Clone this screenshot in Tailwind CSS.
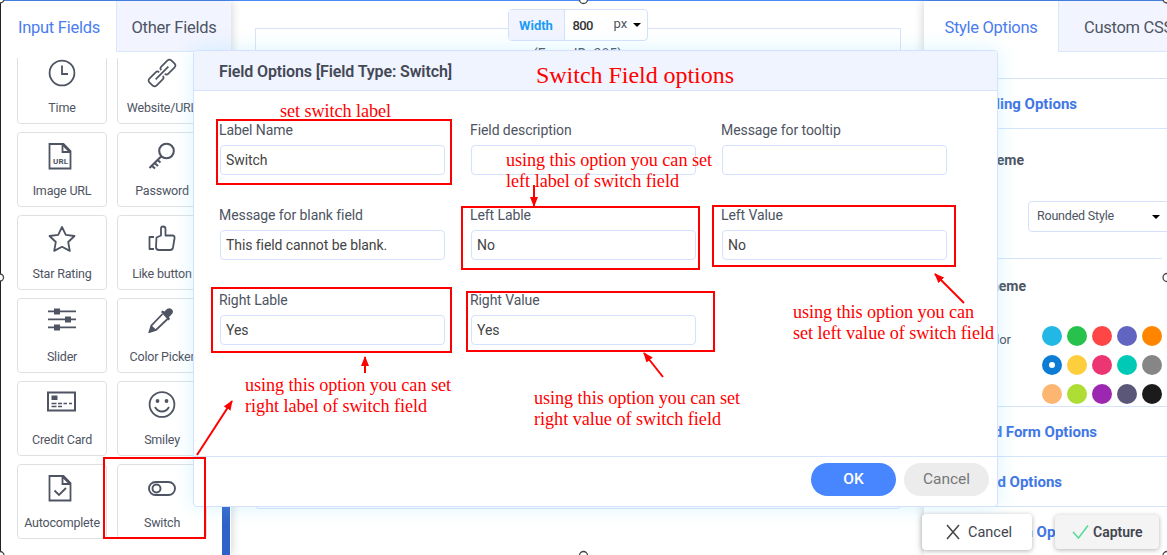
<!DOCTYPE html>
<html lang="en">
<head>
<meta charset="utf-8">
<title>Field Options</title>
<script src="https://cdn.jsdelivr.net/npm/@tailwindcss/browser@4"></script>
</head>
<body class="relative h-[555px] w-[1167px] overflow-hidden bg-white font-['Roboto','Noto_Sans',sans-serif] text-[#4e5462]">
<div class="flex h-[555px] border-t border-[#4a8af4]">
  <!-- Field palette -->
  <aside class="relative z-10 flex w-[231px] shrink-0 flex-col overflow-hidden border-l border-[#222] bg-white shadow-[0_0_10px_rgba(0,0,0,0.2)]">
    <nav class="flex h-[51px] shrink-0 pl-px text-[16.500px] tracking-[-0.25px]">
      <div class="flex w-[114px] shrink-0 items-center justify-center pt-[3px] text-[#4a7df0]">Input Fields</div>
      <div class="flex flex-1 items-center justify-center border-b border-l border-[#d6e8fa] bg-[#f2f4ff] pt-1 whitespace-nowrap">Other Fields</div>
    </nav>
    <div class="mt-[6px] flex-1 overflow-hidden pl-4">
      <div class="-mt-[9px] grid grid-cols-[90px_90px] gap-x-[10px] gap-y-2 text-[12.500px] leading-4 tracking-[-0.2px]">
        <div class="flex h-[75px] flex-col items-center justify-between rounded border border-[#dee1e4] pt-[9px] pb-[7px]">
          <svg class="size-7" viewBox="0 0 28 28" fill="none" stroke="#4e5462" stroke-width="1.8"><circle cx="14" cy="14" r="12.4"/><path d="M14 6.5V15h6"/></svg><span>Time</span></div>
        <div class="flex h-[75px] flex-col items-center justify-between rounded border border-[#dee1e4] pt-[9px] pb-[7px]">
          <svg class="size-7 overflow-visible" viewBox="0 0 28 28" fill="none" stroke="#4e5462" stroke-width="1.7"><g transform="rotate(-45 14 14)"><path d="M12.500 11.500q0-2.500-2.500-2.500H1.500q-3 0-3 3v4q0 3 3 3H10q2.500 0 2.500-2.500M15.500 16.500q0 2.500 2.500 2.500h8.500q3 0 3-3v-4q0-3-3-3H18q-2.500 0-2.500 2.500M5 14h18"/></g></svg><span class="whitespace-nowrap">Website/URL</span></div>
        <div class="flex h-[75px] flex-col items-center justify-between rounded border border-[#dee1e4] pt-[9px] pb-[7px]">
          <svg class="size-7 overflow-visible" viewBox="0 0 28 28" fill="none" stroke="#4e5462" stroke-width="1.8"><path d="M1.500 2h14l7 7v17.500h-21zM14.500 2v8h8"/><path d="M15 3l6.500 6.500"/><text x="12.500" y="21.500" text-anchor="middle" font-size="8" font-weight="700" textLength="15" fill="#4e5462" stroke="none">URL</text></svg><span>Image URL</span></div>
        <div class="flex h-[75px] flex-col items-center justify-between rounded border border-[#dee1e4] pt-[9px] pb-[7px]">
          <svg class="size-7" viewBox="0 0 28 28" fill="none" stroke="#4e5462" stroke-width="2.100"><circle cx="18.500" cy="9" r="7.300"/><path d="M13.300 14.300L1.500 26M3.500 23.500l3.500 3M6 20.500l4 3.500M9.500 18l3 2.500"/></svg><span>Password</span></div>
        <div class="flex h-[75px] flex-col items-center justify-between rounded border border-[#dee1e4] pt-[9px] pb-[7px]">
          <svg class="size-7" viewBox="0 0 28 28" fill="none" stroke="#4e5462" stroke-width="1.800" stroke-linejoin="round"><path d="M14 2l3.800 7.800 8.700 1.200-6.300 6 1.600 8.900-7.800-4.100-7.800 4.100L7.800 17l-6.300-6 8.700-1.200z"/></svg><span>Star Rating</span></div>
        <div class="flex h-[75px] flex-col items-center justify-between rounded border border-[#dee1e4] pt-[9px] pb-[7px]">
          <svg class="size-7" viewBox="0 0 28 28" fill="none" stroke="#4e5462" stroke-width="1.800" stroke-linejoin="round"><path d="M6 12H1.500v12H6M8.500 12.500l4.500-2V3.500q0-2 2-2 2.500 0 2.500 2.500v6.500h7q2.500 0 2 3l-1.500 9q-.5 2.500-3 2.500H11q-3 0-3-3z"/></svg><span class="whitespace-nowrap">Like button</span></div>
        <div class="flex h-[75px] flex-col items-center justify-between rounded border border-[#dee1e4] pt-[9px] pb-[7px]">
          <svg class="size-7" viewBox="0 0 28 28" fill="#4e5462"><path d="M0 2.500h28v1.800H0zM0 10.500h28v1.800H0zM0 18.500h28v1.800H0z"/><path d="M6 .5h6v6H6zM17 8.500h6v6h-6zM6 16.500h6v6H6z"/></svg><span>Slider</span></div>
        <div class="flex h-[75px] flex-col items-center justify-between rounded border border-[#dee1e4] pt-[9px] pb-[7px]">
          <svg class="size-7" viewBox="0 0 28 28"><path d="M14.500 6L3.500 17.500 1.500 24l6.500-2L19.500 11" fill="none" stroke="#4e5462" stroke-width="1.800"/><path d="M1 25l2-8 5.500 5zM13 4l1.500-1.500 2 1q3-4 6-3 4 2 1.500 5.500L21 9l1 2-1.500 1.500z" fill="#4e5462"/></svg><span class="whitespace-nowrap">Color Picker</span></div>
        <div class="flex h-[75px] flex-col items-center justify-between rounded border border-[#dee1e4] pt-[9px] pb-[7px]">
          <svg class="size-7 overflow-visible" viewBox="0 0 28 28"><path d="M0 1.500h27v18H0z" fill="none" stroke="#4e5462" stroke-width="2"/><path d="M3.500 4.500h6v4.500h-6z" fill="#4e5462"/><path d="M3.500 12.500h5m1.500 0h4m1.500 0h3.500m2 0h3M3.500 15.500h5m1.500 0h4" stroke="#4e5462" stroke-width="1.700"/></svg><span class="whitespace-nowrap">Credit Card</span></div>
        <div class="flex h-[75px] flex-col items-center justify-between rounded border border-[#dee1e4] pt-[9px] pb-[7px]">
          <svg class="size-7" viewBox="0 0 28 28" fill="none" stroke="#4e5462" stroke-width="1.800"><circle cx="14" cy="13.500" r="12.400"/><path d="M7 16q2.500 4.500 7 4.500t7-4.500"/><g fill="#4e5462" stroke="none"><circle cx="9.500" cy="10" r="1.900"/><circle cx="18.500" cy="10" r="1.900"/></g></svg><span>Smiley</span></div>
        <div class="flex h-[75px] flex-col items-center justify-between rounded border border-[#dee1e4] pt-[9px] pb-[7px]">
          <svg class="size-7" viewBox="0 0 28 28" fill="none" stroke="#4e5462" stroke-width="1.800"><path d="M1.500 2h14l7 7v17.500h-21zM14.500 2v8h8M15 3l6.500 6.500M6.500 16.500l4.500 4.500 7-7"/></svg><span>Autocomplete</span></div>
        <div class="flex h-[75px] flex-col items-center justify-between rounded border border-[#dee1e4] pt-[9px] pb-[7px]">
          <svg class="size-7" viewBox="0 0 28 28" fill="none" stroke="#4e5462" stroke-width="1.900"><rect x="1" y="8" width="26" height="13" rx="6.500"/><circle cx="8.500" cy="14.500" r="4"/></svg><span>Switch</span></div>
      </div>
    </div>
    <div class="absolute right-px bottom-0 h-[60px] w-[8px] bg-[#2f62c9]"></div>
  </aside>

  <!-- Form canvas -->
  <main class="relative flex flex-1 flex-col items-center">
    <div class="absolute top-[27px] right-[23px] left-6 h-[481px] rounded-b border border-[#d9e2fb]"></div>
    <div class="z-10 mt-2 flex h-[32px] w-[140px] items-center rounded border border-[#d5e1fb] bg-white text-[13px]">
      <div class="flex h-full w-14 items-center justify-center border-r border-[#d5e1fb] bg-[#f2f4ff] pt-px font-bold text-[#1a9cf5]">Width</div>
      <div class="w-10 pt-px pl-2 font-medium tracking-[-0.6px] text-[#333]">800</div>
      <div class="pb-0.5 pl-[9px]">px</div>
      <div class="ml-[6px] h-0 w-0 border-x-4 border-t-4 border-x-transparent border-t-black"></div>
    </div>
    <div class="mt-[2px] text-[14px] leading-[22px]">(Form ID: 385)</div>
  </main>

  <!-- Style panel -->
  <aside class="relative flex w-[243px] shrink-0 flex-col overflow-hidden bg-white shadow-[0_0_10px_rgba(0,0,0,0.2)]">
    <nav class="flex h-[51px] shrink-0 text-[16.500px] tracking-[-0.3px]">
      <div class="flex w-[134px] shrink-0 items-center justify-center pt-[3px] text-[#4a7df0]">Style Options</div>
      <div class="flex flex-1 items-center border-b border-l border-[#d6e8fa] bg-[#f2f4ff] pt-1 pl-[25px] whitespace-nowrap">Custom CSS</div>
    </nav>
    <div class="mt-[26px] flex h-[51px] shrink-0 items-center border-y border-[#d5e3fb] pt-0.5 text-[15px] font-bold whitespace-nowrap text-[#4177e4]"><span class="flex w-[153px] justify-end">Basic Styling Options</span></div>
    <div class="flex h-[130px] shrink-0 flex-col">
      <div class="mt-[19px] flex w-[100px] justify-end text-[14px] leading-6 font-bold whitespace-nowrap">Select Theme</div>
      <div class="mt-[29px] ml-[104px] flex h-8 w-[150px] items-center rounded border border-[#d5e1fb] pl-2 text-[12.500px] tracking-[-0.2px]"><span class="w-[115px]">Rounded Style</span><i class="h-0 w-0 border-x-4 border-t-4 border-x-transparent border-t-black"></i></div>
      <div class="mt-[26px] w-[238px] border-t border-[#d5e3fb]"></div>
    </div>
    <div class="flex h-[147px] shrink-0 flex-col">
      <div class="mt-[15px] flex w-[102px] justify-end text-[14px] leading-6 font-bold whitespace-nowrap">Color Scheme</div>
      <div class="mt-[28px] flex">
        <div class="mt-[4px] flex w-[87px] justify-end text-[13px] leading-5 whitespace-nowrap">Choose Color</div>
        <div class="ml-[31px] grid grid-cols-[repeat(5,20px)] gap-x-[5px] gap-y-[9px]">
          <i class="size-5 rounded-full bg-[#23b7e5]"></i><i class="size-5 rounded-full bg-[#27c24c]"></i><i class="size-5 rounded-full bg-[#ff4545]"></i><i class="size-5 rounded-full bg-[#6164c1]"></i><i class="size-5 rounded-full bg-[#ff8500]"></i>
          <i class="flex size-5 items-center justify-center rounded-full bg-[#0c7cd5]"><b class="size-1.5 rounded-full bg-white"></b></i><i class="size-5 rounded-full bg-[#ffce3c]"></i><i class="size-5 rounded-full bg-[#ec3573]"></i><i class="size-5 rounded-full bg-[#00c9b6]"></i><i class="size-5 rounded-full bg-[#868686]"></i>
          <i class="size-5 rounded-full bg-[#fdb572]"></i><i class="size-5 rounded-full bg-[#aede36]"></i><i class="size-5 rounded-full bg-[#9c27b0]"></i><i class="size-5 rounded-full bg-[#5b5779]"></i><i class="size-5 rounded-full bg-[#1b1b1b]"></i>
        </div>
      </div>
    </div>
    <div class="flex h-[50px] shrink-0 items-center border-t border-[#d5e3fb] pt-0.5 text-[15px] font-bold whitespace-nowrap text-[#4177e4]"><span class="flex w-[173px] justify-end">Advanced Form Options</span></div>
    <div class="flex h-[50px] shrink-0 items-center border-t border-[#d5e3fb] pt-0.5 text-[15px] font-bold whitespace-nowrap text-[#4177e4]"><span class="flex w-[138px] justify-end">Input Field Options</span></div>
    <div class="flex h-[50px] shrink-0 items-center border-t border-[#d5e3fb] pt-0.5 text-[15px] font-bold whitespace-nowrap text-[#4177e4]"><span class="flex w-[165px] justify-end">Submit Button Options</span></div>
  </aside>
</div>

<!-- Field options dialog -->
<section class="absolute top-[50px] left-[193px] z-20 flex h-[457px] w-[805px] flex-col rounded border border-[#d5e1fd] bg-white text-[14px] shadow-[0_0_20px_rgba(120,215,255,0.28)]">
  <header class="flex h-10 shrink-0 items-center rounded-t border-b border-[#d5e1fd] bg-[#f0f4ff] pt-[3px] pl-[25px] text-[16px] font-semibold tracking-[-0.12px] text-[#434955]">Field Options [Field Type: Switch]</header>
  <div class="grid flex-1 auto-rows-[85px] grid-cols-[repeat(3,251px)] pt-[29px] pl-[25px] leading-5 tracking-[-0.08px]">
    <label class="flex flex-col">Label Name<span class="mt-[5px] ml-px flex h-[30px] w-[225px] items-center rounded border border-[#d5e1fd] pl-[5px] text-[#444]">Switch</span></label>
    <label class="flex flex-col">Field description<span class="mt-[5px] ml-px flex h-[30px] w-[225px] rounded border border-[#d5e1fd]"></span></label>
    <label class="flex flex-col">Message for tooltip<span class="mt-[5px] ml-px flex h-[30px] w-[225px] rounded border border-[#d5e1fd]"></span></label>
    <label class="flex flex-col">Message for blank field<span class="mt-[5px] ml-px flex h-[30px] w-[225px] items-center rounded border border-[#d5e1fd] pl-[5px] text-[#444]">This field cannot be blank.</span></label>
    <label class="flex flex-col">Left Lable<span class="mt-[5px] ml-px flex h-[30px] w-[225px] items-center rounded border border-[#d5e1fd] pl-[5px] text-[#444]">No</span></label>
    <label class="flex flex-col">Left Value<span class="mt-[5px] ml-px flex h-[30px] w-[225px] items-center rounded border border-[#d5e1fd] pl-[5px] text-[#444]">No</span></label>
    <label class="flex flex-col">Right Lable<span class="mt-[5px] ml-px flex h-[30px] w-[225px] items-center rounded border border-[#d5e1fd] pl-[5px] text-[#444]">Yes</span></label>
    <label class="flex flex-col">Right Value<span class="mt-[5px] ml-px flex h-[30px] w-[225px] items-center rounded border border-[#d5e1fd] pl-[5px] text-[#444]">Yes</span></label>
  </div>
  <footer class="flex h-[50px] shrink-0 justify-end gap-2 border-t border-[#d5e1fd] pt-[6px] pr-2 text-[15.500px]">
    <button class="h-[33px] w-[85px] rounded-full bg-[#4786ff] pt-px font-medium text-white">OK</button>
    <button class="h-[33px] w-[85px] rounded-full bg-[#ececec] pt-px text-[#777]">Cancel</button>
  </footer>
</section>

<!-- Capture tool buttons -->
<div class="absolute top-[514px] left-[922px] z-30 flex items-center gap-[23px] text-[14.500px] text-[#42454f]">
  <div class="flex h-9 w-[110px] items-center gap-2 rounded bg-white pl-6 shadow-[0_1px_5px_rgba(0,0,0,0.3)]"><svg class="h-4 w-[14px]" viewBox="0 0 14 16" fill="none" stroke="#444" stroke-width="1.500"><path d="M1 1l12 14M13 1L1 15"/></svg><span class="pt-px">Cancel</span></div>
  <div class="flex h-[34px] w-[104px] items-center gap-1 rounded bg-[#f4f4f4] pl-[17px] text-[14px] font-semibold shadow-[0_1px_5px_rgba(0,0,0,0.3)]"><svg class="h-4 w-[17px] shrink-0" viewBox="0 0 17 16" fill="none" stroke="#57dc9a" stroke-width="1.600"><path d="M1 8l5.500 6L16 1.500"/></svg>Capture</div>
</div>

<!-- Annotations -->
<svg class="absolute inset-0 z-40" width="1167" height="555" viewBox="0 0 1167 555">
  <defs><marker id="tip" markerUnits="userSpaceOnUse" markerWidth="10" markerHeight="8" refX="9" refY="4" orient="auto"><path d="M0 0l10 4-10 4z" fill="#f00"/></marker></defs>
  <g fill="none" stroke="#f00" stroke-width="2">
    <path d="M217 120h234v64H217zM462 207h237v62H462zM713 206h242v60H713zM212 288h239v64H212zM467 292h247v59H467zM104 458h101v80H104z"/>
    <g marker-end="url(#tip)"><path d="M534 185v21"/><path d="M964 303l-29-29"/><path d="M365 373v-16"/><path d="M663 377l-19-24"/><path d="M197 455l35-54"/></g>
  </g>
  <g fill="#f00" font-family="'Liberation Serif',serif" font-size="18.200">
    <text x="536" y="83" font-size="24" textLength="198">Switch Field options</text>
    <text x="280" y="117" textLength="111">set switch label</text>
    <text x="506" y="166" textLength="206">using this option you can set</text><text x="506" y="187" textLength="173">left label of switch field</text>
    <text x="793" y="318" textLength="181">using this option you can</text><text x="793" y="339" textLength="201">set left value of switch field</text>
    <text x="245" y="391" textLength="206">using this option you can set</text><text x="245" y="412" textLength="182">right label of switch field</text>
    <text x="534" y="404" textLength="206">using this option you can set</text><text x="534" y="425" textLength="187">right value of switch field</text>
  </g>
  <g fill="#fff" stroke="#444" stroke-width="1.300"><circle cx="583.500" cy="-.5" r="4"/><circle cx="0" cy="277.500" r="3.500"/><circle cx="1167" cy="277.500" r="4"/><circle cx="583.500" cy="555.500" r="4"/><circle cx="0" cy="-1" r="4"/><circle cx="1167" cy="-1" r="4"/><circle cx="0" cy="555.500" r="4"/><circle cx="1167" cy="555.500" r="4"/></g>
</svg>
</body>
</html>
